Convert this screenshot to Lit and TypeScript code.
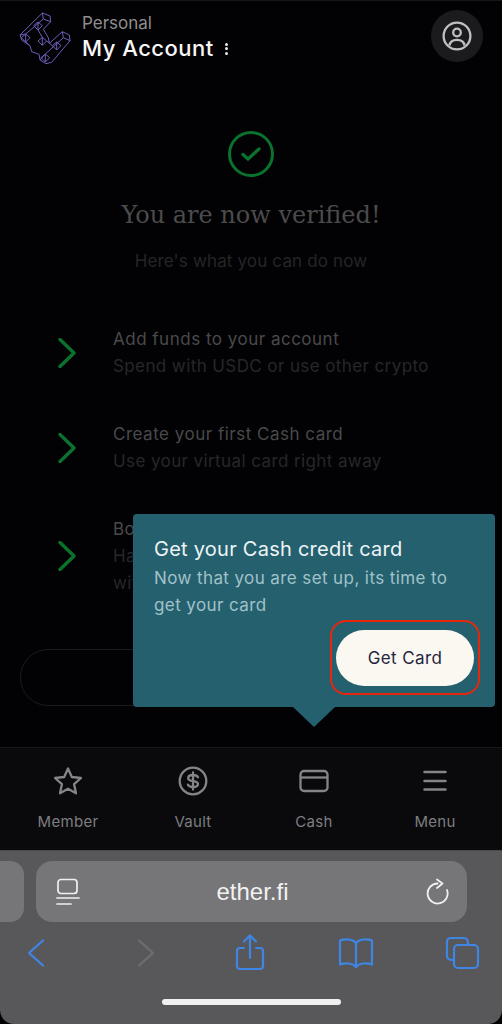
import { LitElement, html, css, svg } from 'lit';
import { customElement } from 'lit/decorators.js';

const chevron = html`<svg class="chev" width="18" height="30" viewBox="0 0 18 30" fill="none">
  <path d="M2 1.5 L16 15 L2 28.5" stroke="#0b722e" stroke-width="3.4" stroke-linecap="round" stroke-linejoin="round"/>
</svg>`;

// little cube crossings along the logo's bars
const cubes = [[84, 62], [47, 98], [97, 108], [140, 122], [106, 158]];

const logoLines = svg`
  <path d="M97 24 L120 33 L122 50 L100 73 L115 98 L118 115 L157 80 L178 90 L180 107 L125 172 L108 176 L90 165 L87 148 L65 140 L60 122 L35 105 L30 90 Z"/>
  <path d="M97 24 L100 42 L122 50 M100 42 L47 87 L30 90 M157 80 L160 98 L180 107 M160 98 L106 147 L90 165 M47 111 L60 122 M84 75 L97 97 M110 108 L127 122"/>
  ${cubes.map(([x, y]) => svg`<path d="M${x} ${y - 11} L${x + 13} ${y} L${x} ${y + 13} L${x - 13} ${y} Z M${x} ${y - 11} L${x} ${y + 13}"/>`)}
`;

@customElement('app-root')
export class AppRoot extends LitElement {
  static styles = css`
    :host { display: block; }
    * { box-sizing: border-box; }
    .page {
      background: #020204;
      border-top: 1px solid #161618;
      display: flex;
      flex-direction: column;
      font-family: Inter, "Noto Sans", sans-serif;
      height: 1024px;
      overflow: hidden;
      position: relative;
      width: 502px;
    }
    header {
      align-items: flex-start;
      display: flex;
      height: 99px;
      padding: 4px 19px 0 10px;
    }
    .logo { flex: none; margin-right: 2px; }
    .names { flex: 1; padding-top: 6px; }
    .personal { color: #8f8d8e; font-size: 17px; line-height: 24px; }
    .account {
      align-items: center;
      color: #f7f7f7;
      display: flex;
      font-size: 22px;
      font-weight: 500;
      gap: 10px;
      letter-spacing: 0.5px;
      line-height: 27px;
    }
    .dots { display: flex; flex-direction: column; gap: 1.5px; margin-left: 1px; }
    .dots i { background: #e8e8e8; border-radius: 50%; display: block; height: 3px; width: 3px; }
    .avatar {
      align-items: center;
      background: #1b1b1d;
      border-radius: 50%;
      display: flex;
      height: 52px;
      justify-content: center;
      margin-top: 5px;
      width: 52px;
    }
    main { display: flex; flex: 1; flex-direction: column; padding-top: 31px; }
    .check { align-self: center; display: block; }
    h1 {
      color: #4c4b4c;
      font-family: "DejaVu Serif", serif;
      font-size: 24px;
      font-weight: 400;
      line-height: 32px;
      margin: 22px 0 0;
      text-align: center;
    }
    .lead { color: #252527; font-size: 17px; letter-spacing: 0.15px; line-height: 24px; margin-top: 18px; text-align: center; }
    .rows { display: flex; flex-direction: column; gap: 42px; margin-top: 54px; padding-left: 58px; }
    .row { align-items: center; display: flex; gap: 37px; }
    .chev { flex: none; margin-top: -2px; }
    .row b { color: #4a4a4b; display: block; font-size: 17px; font-weight: 400; letter-spacing: 0.5px; line-height: 24px; }
    .row span { color: #272729; display: block; font-size: 17px; letter-spacing: 0.4px; line-height: 27px; }
    .row b + span { margin-top: 2px; }
    .ghost {
      border: 1px solid #1b1b1d;
      border-radius: 28px;
      height: 57px;
      margin: 52px 20px 0;
    }
    nav {
      background: #0a0a0d;
      border-top: 1px solid #17171c;
      display: grid;
      grid-template-columns: 124px 126px 116px 126px;
      height: 103px;
      padding: 18px 0 0 6px;
    }
    nav div {
      align-items: center;
      color: #7e7e80;
      display: flex;
      flex-direction: column;
      font-size: 15px;
      gap: 17px;
      letter-spacing: 0.3px;
      line-height: 18px;
    }
    nav svg { display: block; }
    .safari {
      background: #58575a;
      border-bottom-left-radius: 14px;
      border-bottom-right-radius: 14px;
      border-top: 1px solid #49484b;
      display: flex;
      flex-direction: column;
      flex: none;
      height: 174px;
      padding-top: 10px;
    }
    .bar { display: flex; gap: 12px; height: 61px; margin-left: -40px; padding-right: 35px; }
    .tab { background: #767578; border-radius: 14px; flex: none; width: 64px; }
    .url {
      align-items: center;
      background: #767578;
      border-radius: 16px;
      display: flex;
      flex: 1;
      justify-content: space-between;
      padding: 0 18px 0 20px;
    }
    .url span {
      color: #f2f2f2;
      font-family: "Liberation Sans", sans-serif;
      font-size: 24px;
    }
    .tools {
      align-items: center;
      display: flex;
      height: 62px;
      justify-content: space-between;
      padding: 0 20px 0 16px;
    }
    .tools svg { display: block; flex: none; }
    .home {
      align-self: center;
      background: #f0f0f0;
      border-radius: 3px;
      height: 6px;
      margin-top: 15px;
      width: 179px;
    }
    .tip {
      background: #25606f;
      border-radius: 4px;
      height: 193px;
      left: 133px;
      padding: 20px 21px;
      position: absolute;
      top: 513px;
      width: 362px;
    }
    .tip::after {
      background: #25606f;
      bottom: -20px;
      clip-path: polygon(0 0, 100% 0, 50% 100%);
      content: '';
      height: 20px;
      left: 160px;
      position: absolute;
      width: 42px;
    }
    .tip h2 { color: #eef4f5; font-size: 20px; font-weight: 400; letter-spacing: 0.25px; line-height: 30px; margin: 0; }
    .tip p { color: #a0c2c8; font-size: 17px; letter-spacing: 0.4px; line-height: 27px; margin: 1px 0 0; width: 310px; }
    .cta {
      align-items: center;
      background: #fbf8f1;
      border-radius: 28px;
      bottom: 21px;
      color: #25243f;
      display: flex;
      font-size: 17px;
      height: 56px;
      justify-content: center;
      letter-spacing: 0.4px;
      position: absolute;
      right: 21px;
      width: 138px;
    }
    .ring {
      border: 2.5px solid #e8260e;
      border-radius: 16px;
      bottom: 12px;
      height: 75px;
      position: absolute;
      right: 15px;
      width: 150px;
    }
  `;

  render() {
    return html`
      <div class="page">
        <header>
          <svg class="logo" width="70" height="70" viewBox="0 0 210 210" fill="none" stroke="#6a5eb8" stroke-width="3" stroke-linejoin="round">${logoLines}</svg>
          <div class="names">
            <div class="personal">Personal</div>
            <div class="account">My Account <span class="dots"><i></i><i></i><i></i></span></div>
          </div>
          <div class="avatar">
            <svg width="30" height="30" viewBox="0 0 30 30" fill="none" stroke="#c0c0c0" stroke-width="2.3">
              <circle cx="15" cy="15" r="13.4"/>
              <circle cx="15" cy="11.5" r="3.8"/>
              <path d="M7.5 24.5 C8 20 10.5 18.8 15 18.8 C19.5 18.8 22 20 22.5 24.5"/>
            </svg>
          </div>
        </header>
        <main>
          <svg class="check" width="46" height="46" viewBox="0 0 46 46" fill="none" stroke="#0b722e">
            <circle cx="23" cy="23" r="21.5" stroke-width="3"/>
            <path d="M15 23.5 L20 28 L31 18" stroke-width="3.4" stroke-linecap="round" stroke-linejoin="round"/>
          </svg>
          <h1>You are now verified!</h1>
          <div class="lead">Here's what you can do now</div>
          <div class="rows">
            <div class="row">${chevron}<div><b>Add funds to your account</b><span>Spend with USDC or use other crypto</span></div></div>
            <div class="row">${chevron}<div><b>Create your first Cash card</b><span>Use your virtual card right away</span></div></div>
            <div class="row">${chevron}<div><b>Boost your rewards</b><span>Have your card ready to spend</span><span>with every purchase</span></div></div>
          </div>
          <div class="ghost"></div>
        </main>
        <nav>
          <div>
            <svg width="30" height="30" viewBox="0 0 30 30" fill="none" stroke="#858587" stroke-width="2.3" stroke-linejoin="round">
              <path d="M15 2.5 L18.8 11 L28 12 L21.1 18.2 L23 27.3 L15 22.7 L7 27.3 L8.9 18.2 L2 12 L11.2 11 Z"/>
            </svg>
            Member
          </div>
          <div>
            <svg width="30" height="30" viewBox="0 0 30 30" fill="none" stroke="#858587" stroke-width="2.3">
              <circle cx="15" cy="15" r="13.3"/>
              <path d="M20 11.2 C19.3 9.6 17.5 9 15 9 C12 9 10.2 10.3 10.2 12.2 C10.2 16.5 20 13.8 20 18 C20 19.9 18 21 15 21 C12.4 21 10.6 20.2 10 18.6 M15 6.5 V23.5" stroke-linecap="round"/>
            </svg>
            Vault
          </div>
          <div>
            <svg width="30" height="30" viewBox="0 0 30 30" fill="none" stroke="#858587" stroke-width="2.3">
              <rect x="1.5" y="5" width="27" height="20" rx="3.5"/>
              <path d="M1.5 11.5 H28.5"/>
            </svg>
            Cash
          </div>
          <div>
            <svg width="30" height="30" viewBox="0 0 30 30" fill="none" stroke="#858587" stroke-width="2.5" stroke-linecap="round">
              <path d="M4.5 6 H25.5 M4.5 15 H25.5 M4.5 23.5 H25.5"/>
            </svg>
            Menu
          </div>
        </nav>
        <section class="safari">
          <div class="bar">
            <div class="tab"></div>
            <div class="url">
              <svg width="24" height="28" viewBox="0 0 24 28" fill="none" stroke="#f0f0f0" stroke-width="1.7" stroke-linecap="round">
                <rect x="2" y="1.5" width="19" height="14" rx="3"/>
                <path d="M1 20 H23 M1 26 H15"/>
              </svg>
              <span>ether.fi</span>
              <svg width="24" height="28" viewBox="0 0 24 28" fill="none" stroke="#f0f0f0" stroke-width="1.8" stroke-linecap="round" stroke-linejoin="round">
                <path d="M12.5 5.5 A10 10 0 1 0 22 12"/>
                <path d="M12 1.5 L17.5 5.5 L12 10"/>
              </svg>
            </div>
          </div>
          <div class="tools">
            <svg width="40" height="30" viewBox="0 0 40 30" fill="none" stroke="#3f86e4" stroke-width="2.3" stroke-linecap="round" stroke-linejoin="round">
              <path d="M27 2.5 L13 15 L27 27.5"/>
            </svg>
            <svg width="40" height="30" viewBox="0 0 40 30" fill="none" stroke="#6e6d70" stroke-width="2.3" stroke-linecap="round" stroke-linejoin="round">
              <path d="M16 2.5 L30 15 L16 27.5"/>
            </svg>
            <svg width="40" height="38" viewBox="0 0 40 38" fill="none" stroke="#3f86e4" stroke-width="2.2" stroke-linecap="round" stroke-linejoin="round">
              <path d="M15 14 H11 Q8 14 8 17 V32 Q8 35 11 35 H31 Q34 35 34 32 V17 Q34 14 31 14 H27"/>
              <path d="M21 24 V2 M15 7.5 L21 1.5 L27 7.5"/>
            </svg>
            <svg width="40" height="32" viewBox="0 0 40 32" fill="none" stroke="#3f86e4" stroke-width="2.2" stroke-linejoin="round">
              <path d="M20 6 C17 2 9 1.5 4 3.5 V27.5 C9 25.5 17 26 20 30 C23 26 31 25.5 36 27.5 V3.5 C31 1.5 23 2 20 6 Z"/>
              <path d="M20 6 V30"/>
            </svg>
            <svg width="40" height="34" viewBox="0 0 40 34" fill="none" stroke="#3f86e4" stroke-width="2.2" stroke-linejoin="round">
              <path d="M11 24 Q5 24 5 20 V6 Q5 2 9 2 H22 Q26 2 26 8"/>
              <rect x="12" y="9" width="24" height="23" rx="4"/>
            </svg>
          </div>
          <div class="home"></div>
        </section>
        <div class="tip">
          <h2>Get your Cash credit card</h2>
          <p>Now that you are set up, its time to get your card</p>
          <div class="ring"></div>
          <div class="cta">Get Card</div>
        </div>
      </div>
    `;
  }
}
